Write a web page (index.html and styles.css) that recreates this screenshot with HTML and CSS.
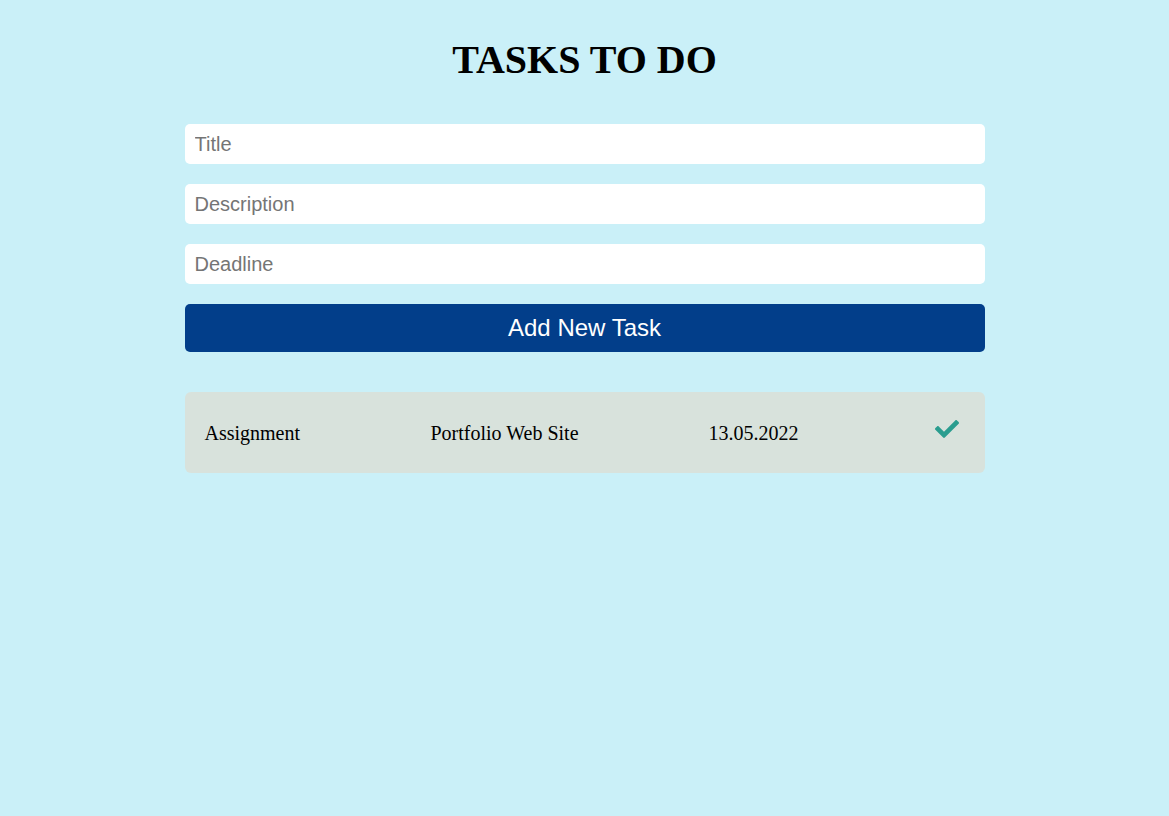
FILE: index.html
```html
<!DOCTYPE html>
<html>
<head>
<meta charset="utf-8">
<link rel="stylesheet" href="styles.css">
</head>
<body>
<div class="app">
  <h1 class="title">TASKS TO DO</h1>
  <form class="form">
    <input class="field" type="text" placeholder="Title">
    <input class="field" type="text" placeholder="Description">
    <input class="field" type="text" placeholder="Deadline">
    <button class="add-btn" type="button">Add New Task</button>
  </form>
  <div class="tasks">
    <div class="task">
      <span class="task-title">Assignment</span>
      <span class="task-desc">Portfolio Web Site</span>
      <span class="task-date">13.05.2022</span>
      <svg class="check" width="24" height="18" viewBox="0 65 512 382"><path fill="#2a9d8f" d="M173.898 439.404l-166.4-166.4c-9.997-9.997-9.997-26.206 0-36.204l36.203-36.204c9.997-9.998 26.207-9.998 36.204 0L192 312.69 432.095 72.596c9.997-9.997 26.207-9.997 36.204 0l36.203 36.204c9.997 9.997 9.997 26.206 0 36.204l-294.4 294.401c-9.998 9.997-26.207 9.997-36.204-.001z"/></svg>
    </div>
  </div>
</div>
</body>
</html>
```
FILE: styles.css
```css
html, body {
  margin: 0;
  padding: 0;
  background: #caf0f8;
  min-height: 100%;
}
body {
  font-family: "Liberation Serif", "Times New Roman", serif;
}
.app {
  width: 800px;
  margin: 0 auto;
  display: flex;
  flex-direction: column;
}
.title {
  margin: 37px 0 41px;
  font-size: 40px;
  line-height: 46px;
  font-weight: bold;
  text-align: center;
  color: #000;
}
.form {
  display: flex;
  flex-direction: column;
  gap: 20px;
}
.field {
  box-sizing: border-box;
  height: 40px;
  border: none;
  border-radius: 5px;
  background: #fff;
  padding: 0 10px;
  font-family: "Liberation Sans", Arial, sans-serif;
  font-size: 20px;
  color: #000;
  outline: none;
}
.field::placeholder {
  color: #757575;
}
.add-btn {
  height: 48px;
  border: none;
  border-radius: 5px;
  background: #023e8a;
  color: #fff;
  font-family: "Liberation Sans", Arial, sans-serif;
  font-size: 24px;
  cursor: pointer;
}
.tasks {
  margin-top: 40px;
  display: flex;
  flex-direction: column;
  gap: 20px;
}
.task {
  box-sizing: border-box;
  height: 81px;
  background: #d8e2dc;
  border-radius: 6px;
  padding: 2px 20px 0 20px;
  display: grid;
  grid-template-columns: 226px 278px 226px auto;
  align-items: center;
  font-size: 20px;
  color: #000;
}
.check {
  display: block;
  margin-bottom: 9px;
}
```
